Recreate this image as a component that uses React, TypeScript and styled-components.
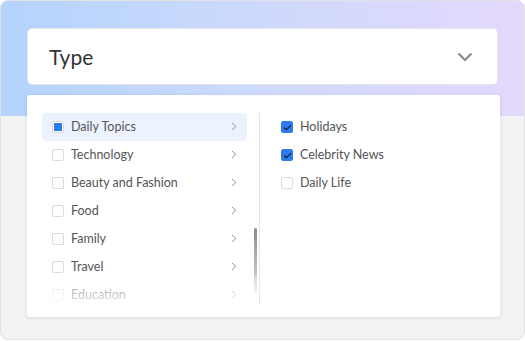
import React from "react";
import styled, { createGlobalStyle } from "styled-components";

const Global = createGlobalStyle`
  html, body { margin: 0; padding: 0; background: #ffffff; }
  * { box-sizing: border-box; }
  body { font-family: "Lato", "Noto Sans", sans-serif; }
`;

const Frame = styled.div`
  width: 525px;
  height: 340px;
  border: 1px solid #e2e2e2;
  border-radius: 8px;
  overflow: hidden;
  background:
    linear-gradient(90deg, #b3d3fd 0%, #c9d9fc 40%, #e4d9fd 100%) top left / 100% 115px no-repeat,
    #f3f3f3;
  padding: 27px 24px 0 26px;
`;

const Select = styled.div`
  height: 57px;
  width: 471px;
  background: #ffffff;
  border: 1px solid #e4e4ea;
  border-radius: 5px;
  display: flex;
  align-items: center;
  justify-content: space-between;
  padding: 0 24px 0 21px;
`;

const SelectLabel = styled.span`
  font-size: 21px;
  color: #333333;
  font-family: "Lato", "Noto Sans", sans-serif;
`;

const Panel = styled.div`
  margin-top: 10px;
  width: 473px;
  height: 222px;
  background: #ffffff;
  border-radius: 3px;
  box-shadow: 0 1px 4px rgba(0, 0, 0, 0.1);
  display: flex;
  padding: 18px 0 12px 15px;
`;

const LeftCol = styled.div`
  position: relative;
  width: 218px;
  border-right: 1px solid #e6e6e6;
  padding-right: 12px;
  overflow: hidden;
  &::after {
    content: "";
    position: absolute;
    left: 0;
    right: 0;
    bottom: 0;
    height: 30px;
    background: linear-gradient(rgba(255,255,255,0.3), rgba(255,255,255,0.85));
    pointer-events: none;
  }
`;

const RightCol = styled.div`
  flex: 1;
  padding-left: 11px;
`;

const Row = styled.div<{ $active?: boolean }>`
  height: 28px;
  display: flex;
  align-items: center;
  padding: 0 10px 1px;
  border-radius: 4px;
  background: ${(p) => (p.$active ? "#ecf3fe" : "transparent")};
  font-size: 12.5px;
  color: #555555;
`;

const Label = styled.span`
  flex: 1;
  margin-left: 7px;
`;

const Box = styled.span<{ $checked?: boolean }>`
  width: 12px;
  height: 12px;
  border-radius: 2px;
  border: 1px solid ${(p) => (p.$checked ? "#2f7cf1" : "#dcdcdc")};
  background: ${(p) => (p.$checked ? "#2f7cf1" : "#ffffff")};
  display: flex;
  align-items: center;
  justify-content: center;
  flex-shrink: 0;
  margin-top: 1px;
`;

const Dot = styled.span`
  width: 8px;
  height: 8px;
  background: #2f7cf1;
`;

const Thumb = styled.div`
  position: absolute;
  right: 2px;
  top: 115px;
  width: 3px;
  height: 65px;
  border-radius: 2px;
  background: linear-gradient(#8c8c8c, #dadada);
`;

const Chevron = () => (
  <svg width="6" height="9" viewBox="0 0 6 9">
    <path d="M1 1 L5 4.5 L1 8" fill="none" stroke="#9a9a9a" strokeWidth="1" />
  </svg>
);

const Check = () => (
  <svg width="9" height="7" viewBox="0 0 9 7">
    <path d="M1 3.5 L3.3 5.8 L8 1.2" fill="none" stroke="#1b2a4a" strokeWidth="1.4" />
  </svg>
);

const categories = [
  "Daily Topics",
  "Technology",
  "Beauty and Fashion",
  "Food",
  "Family",
  "Travel",
  "Education",
];

const subs = [
  { name: "Holidays", checked: true },
  { name: "Celebrity News", checked: true },
  { name: "Daily Life", checked: false },
];

export default function App() {
  return (
    <>
      <Global />
      <Frame>
        <Select>
          <SelectLabel>Type</SelectLabel>
          <svg width="16" height="10" viewBox="0 0 16 10">
            <path d="M1.5 1.5 L8 8 L14.5 1.5" fill="none" stroke="#8a8a8f" strokeWidth="2.2" />
          </svg>
        </Select>
        <Panel>
          <LeftCol>
            {categories.map((c, i) => (
              <Row key={c} $active={i === 0}>
                <Box>{i === 0 && <Dot />}</Box>
                <Label>{c}</Label>
                <Chevron />
              </Row>
            ))}
            <Thumb />
          </LeftCol>
          <RightCol>
            {subs.map((s) => (
              <Row key={s.name}>
                <Box $checked={s.checked}>{s.checked && <Check />}</Box>
                <Label>{s.name}</Label>
              </Row>
            ))}
          </RightCol>
        </Panel>
      </Frame>
    </>
  );
}
